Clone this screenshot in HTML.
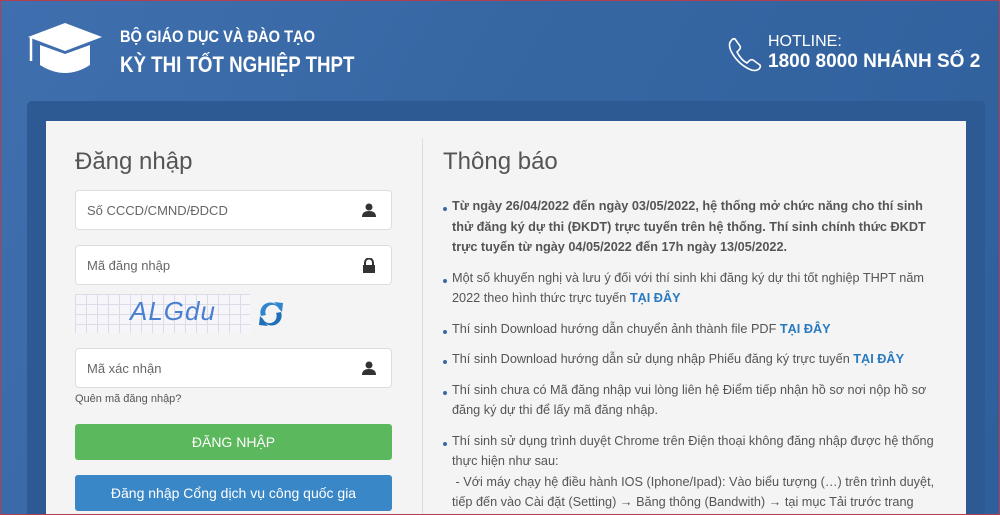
<!DOCTYPE html>
<html><head><meta charset="utf-8"><style>
*{margin:0;padding:0;box-sizing:border-box}
html{width:1000px;height:515px;overflow:hidden}
body{width:1000px;height:515px;overflow:hidden;font-family:"Liberation Sans",sans-serif;background:linear-gradient(120deg,#3f6fae 0%,#3767a3 40%,#2f5f9c 100%);position:relative}
.frame{position:absolute;left:0;top:0;width:1000px;height:515px;border:1px solid #b04050;z-index:5;pointer-events:none}
.hdr1{position:absolute;left:120px;top:27px;color:#fff;font-weight:bold;font-size:17px;transform:scaleX(0.86);transform-origin:left}
.hdr2{position:absolute;left:120px;top:52px;color:#fff;font-weight:bold;font-size:22px;transform:scaleX(0.85);transform-origin:left}
.hl1{position:absolute;left:768px;top:33px;color:#fff;font-size:16px}
.hl2{position:absolute;left:768px;top:51px;color:#fff;font-size:19px;font-weight:bold}
.dark{position:absolute;left:27px;top:101px;width:958px;height:420px;background:#2d5a92;border-radius:5px}
.panel{position:absolute;left:46px;top:121px;width:920px;height:400px;background:#f4f4f4}
.div{position:absolute;left:422px;top:138px;width:1px;height:380px;background:#ddd}
h2{position:absolute;font-weight:normal;font-size:24px;color:#555}
.inp{position:absolute;left:75px;width:317px;height:40px;background:#fff;border:1px solid #ddd;border-radius:4px;font-size:13px;color:#666;padding:12px 0 0 11px}
.ic{position:absolute;right:15px;top:12px}
.btn{position:absolute;left:75px;width:317px;height:36px;border-radius:3px;color:#fff;font-size:14px;text-align:center;line-height:36px}
ul{position:absolute;left:443px;top:196px;width:495px;list-style:none;font-size:12.7px;color:#555;line-height:20.5px}
li{position:relative;padding-left:9px;margin-bottom:10px}
li:before{content:"";position:absolute;left:0;top:11px;width:4px;height:4px;border-radius:2px;background:#3a6aa5}
b.l{color:#2a7ac0}
</style></head><body>
<div class="frame"></div>
<svg style="position:absolute;left:26px;top:21px" width="78" height="56" viewBox="0 0 78 56"><path d="M39 2 L76 16 L39 30 L2 16Z" fill="#fff"/><path d="M14 24 L14 44 Q39 60 64 44 L64 24 L39 33 Z" fill="#fff"/><path d="M5 17 L5 40" stroke="#fff" stroke-width="2.5"/></svg>
<div class="hdr1">BỘ GIÁO DỤC VÀ ĐÀO TẠO</div>
<div class="hdr2">KỲ THI TỐT NGHIỆP THPT</div>
<svg style="position:absolute;left:727px;top:36px" width="36" height="36" viewBox="0 0 36 36"><path d="M8 3 L13 10 Q14 12 12 14 L10 16 Q14 24 20 27 L22 25 Q24 23 26 24 L33 29 Q34 31 32 33 Q28 36 22 33 Q10 27 4 15 Q1 8 4 5 Q6 2 8 3Z" fill="none" stroke="#fff" stroke-width="1.6"/></svg>
<div class="hl1">HOTLINE:</div>
<div class="hl2">1800 8000 NHÁNH SỐ 2</div>
<div class="dark"></div>
<div class="panel"></div>
<div class="div"></div>
<h2 style="left:75px;top:148px">Đăng nhập</h2>
<div class="inp" style="top:190px">Số CCCD/CMND/ĐDCD<svg class="ic" width="14" height="14" viewBox="0 0 14 14"><circle cx="7" cy="4" r="3.5" fill="#333"/><path d="M0 14 Q0 8 7 8 Q14 8 14 14Z" fill="#333"/></svg></div>
<div class="inp" style="top:245px">Mã đăng nhập<svg class="ic" width="14" height="15" viewBox="0 0 14 15"><path d="M3 7 V4.5 A4 4 0 0 1 11 4.5 V7" fill="none" stroke="#333" stroke-width="2"/><rect x="1" y="7" width="12" height="8" fill="#333"/></svg></div>
<div style="position:absolute;left:75px;top:294px;width:175px;height:39px;background-color:#f6f6fa;background-image:linear-gradient(#dcdce8 1px,transparent 1px),linear-gradient(90deg,#dcdce8 1px,transparent 1px);background-size:11px 10px;color:#4a7fd0;font-size:26px;font-style:italic;padding:2px 0 0 55px;letter-spacing:1px">ALGdu</div>
<svg style="position:absolute;left:257px;top:300px" width="28" height="28" viewBox="0 0 28 28"><path d="M4 16 A10 10 0 0 1 20 5 L17 2 L26 3 L25 12 L22 9 A6 6 0 0 0 9 15Z" fill="#2f86cf"/><path d="M24 12 A10 10 0 0 1 8 23 L11 26 L2 25 L3 16 L6 19 A6 6 0 0 0 19 13Z" fill="#1e6fb8"/></svg>
<div class="inp" style="top:348px">Mã xác nhận<svg class="ic" width="14" height="14" viewBox="0 0 14 14"><circle cx="7" cy="4" r="3.5" fill="#333"/><path d="M0 14 Q0 8 7 8 Q14 8 14 14Z" fill="#333"/></svg></div>
<div style="position:absolute;left:75px;top:393px;font-size:11px;color:#555">Quên mã đăng nhập?</div>
<div class="btn" style="top:424px;background:#5cb85c">ĐĂNG NHẬP</div>
<div class="btn" style="top:475px;background:#3a87c8">Đăng nhập Cổng dịch vụ công quốc gia</div>
<h2 style="left:443px;top:148px">Thông báo</h2>
<ul>
<li><b>Từ ngày 26/04/2022 đến ngày 03/05/2022, hệ thống mở chức năng cho thí sinh thử đăng ký dự thi (ĐKDT) trực tuyến trên hệ thống. Thí sinh chính thức ĐKDT trực tuyến từ ngày 04/05/2022 đến 17h ngày 13/05/2022.</b></li>
<li>Một số khuyến nghị và lưu ý đối với thí sinh khi đăng ký dự thi tốt nghiệp THPT năm 2022 theo hình thức trực tuyến <b class="l">TẠI ĐÂY</b></li>
<li>Thí sinh Download hướng dẫn chuyển ảnh thành file PDF <b class="l">TẠI ĐÂY</b></li>
<li>Thí sinh Download hướng dẫn sử dụng nhập Phiếu đăng ký trực tuyến <b class="l">TẠI ĐÂY</b></li>
<li>Thí sinh chưa có Mã đăng nhập vui lòng liên hệ Điểm tiếp nhận hồ sơ nơi nộp hồ sơ đăng ký dự thi để lấy mã đăng nhập.</li>
<li>Thí sinh sử dụng trình duyệt Chrome trên Điện thoại không đăng nhập được hệ thống thực hiện như sau:<br>&nbsp;- Với máy chạy hệ điều hành IOS (Iphone/Ipad): Vào biểu tượng (…) trên trình duyệt, tiếp đến vào Cài đặt (Setting) → Băng thông (Bandwith) → tại mục Tải trước trang</li>
</ul>
</body></html>
